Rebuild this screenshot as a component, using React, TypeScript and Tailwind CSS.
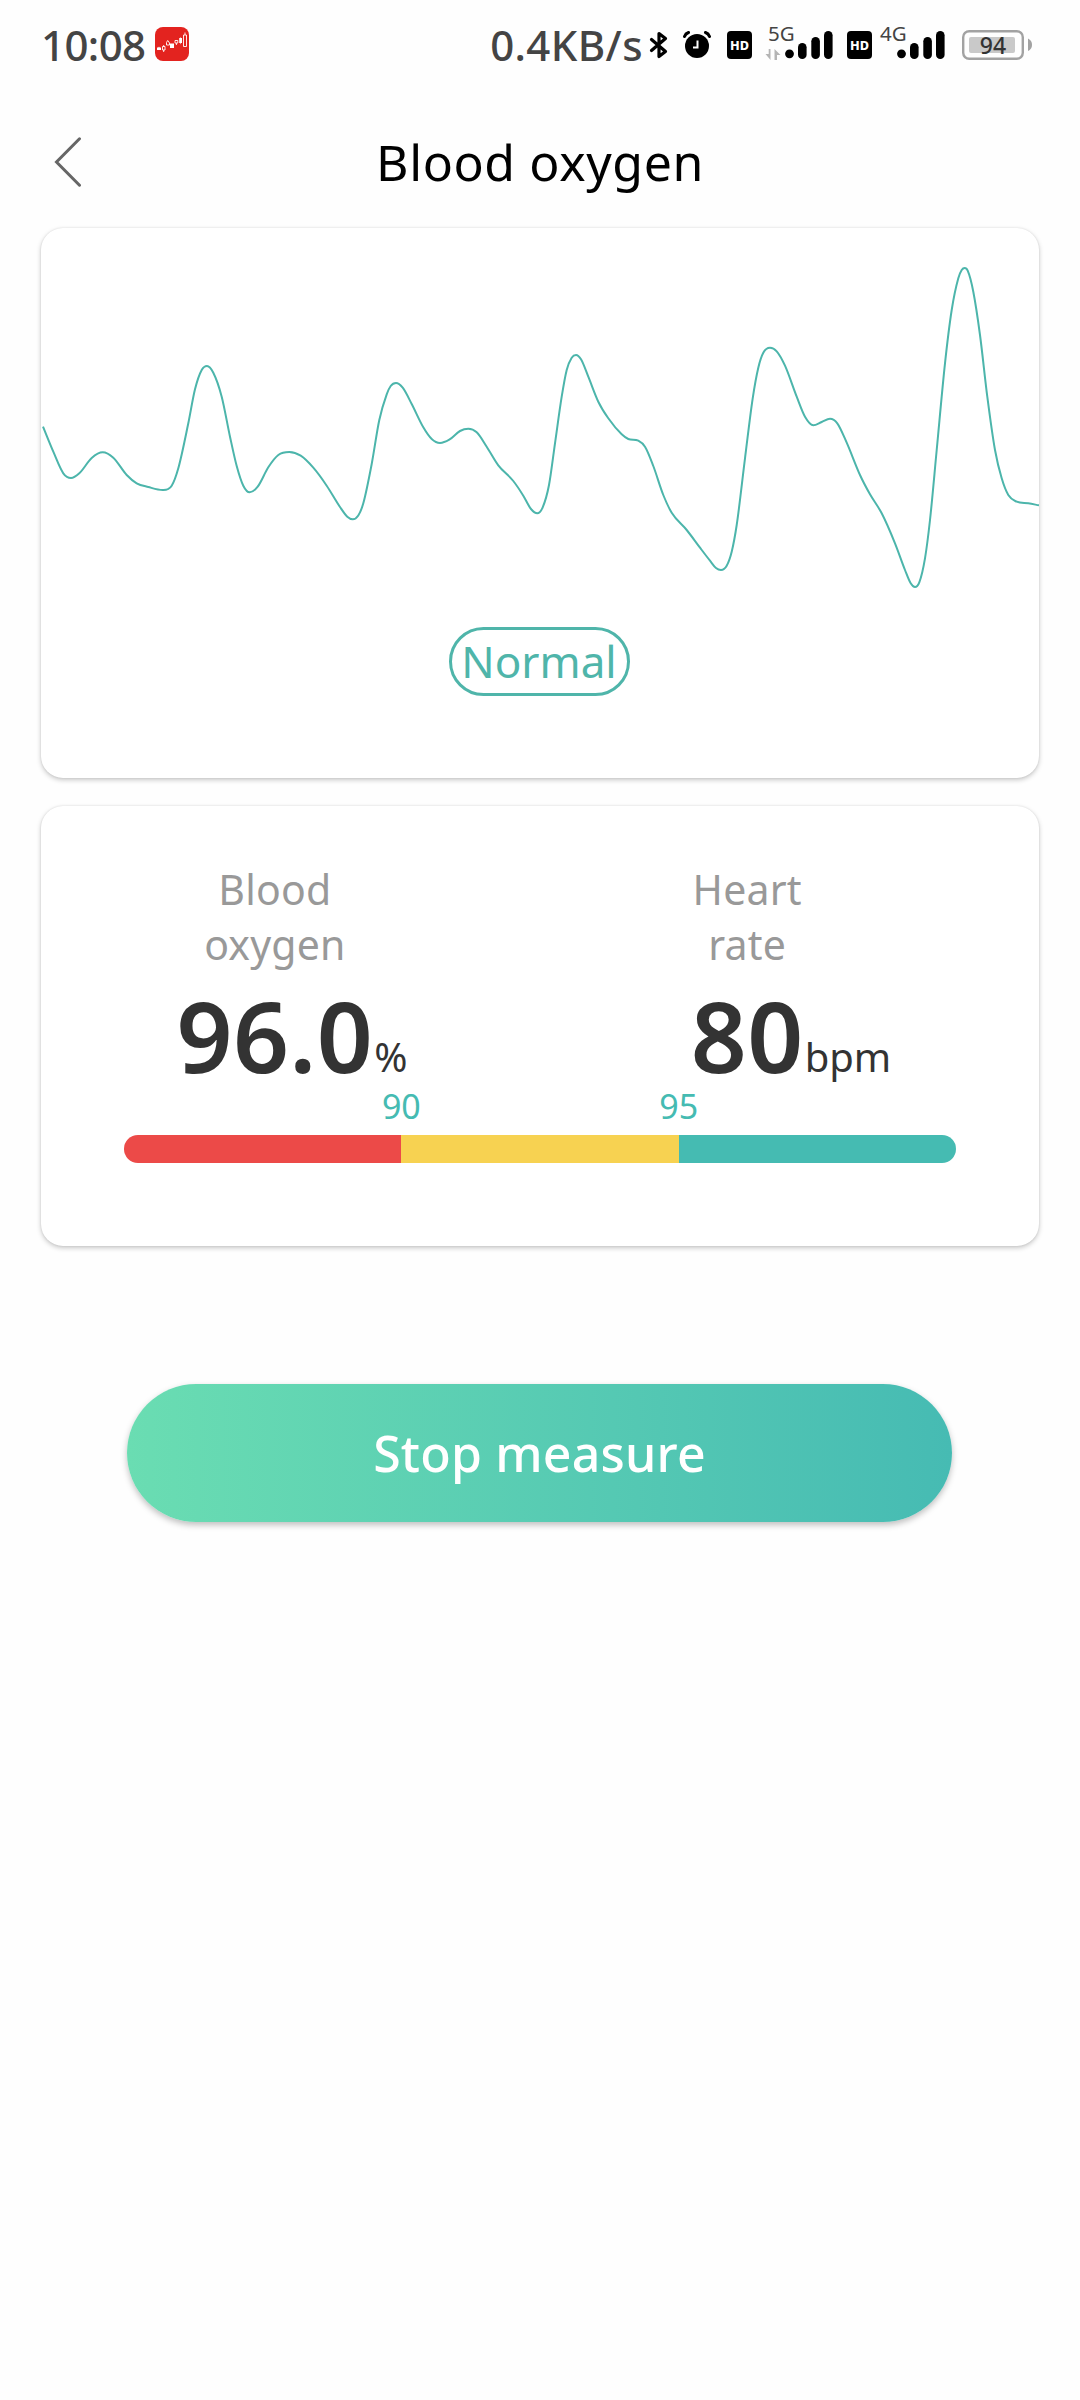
type Point = [number, number];

type Reading = {
  label: string;
  value: string;
  unit: string;
};

const READINGS: Reading[] = [
  { label: "Blood oxygen", value: "96.0", unit: "%" },
  { label: "Heart rate", value: "80", unit: "bpm" },
];

const THRESHOLDS = [90, 95];

const WAVE: Point[] = [
  [43, 426.7], [53.3, 451.7], [63.3, 473.3], [71, 478], [79.3, 473.3],
  [91.7, 458], [102.7, 452.3], [113.3, 457.7], [126.7, 475], [136.7, 483.3],
  [148.3, 487], [162.7, 490], [171.7, 485.7], [178.3, 468.3], [188.3, 423.3],
  [195, 389.3], [201.7, 370], [207, 366], [213.3, 372.7], [221.7, 396.7],
  [230, 436.7], [236.7, 466], [243.3, 485.7], [249.7, 492.3], [257.7, 486.7],
  [268.3, 467.3], [278.3, 455], [289.3, 452], [300.7, 455.7], [313.3, 467.7],
  [326.7, 485.7], [340, 507], [347.3, 516.7], [352.7, 519.3], [358.3, 515.5],
  [363.3, 503.3], [371.7, 464], [379.3, 420], [386.7, 394.3], [390.7, 386],
  [396, 383], [402.7, 387.7], [411.7, 404], [423.3, 427.3], [431.7, 439],
  [440, 443], [449.3, 439.7], [460, 431], [468.3, 428.7], [476.7, 432.3],
  [486.7, 446.7], [498.3, 465.3], [513.3, 481], [523.3, 495.7], [531, 509],
  [537.3, 513.3], [542.7, 507.3], [549, 485], [555, 443.3], [561.7, 396.7],
  [566.7, 370], [571.7, 357.7], [576, 355], [581, 359.3], [588.3, 376.7],
  [598.3, 401.7], [608.3, 418.3], [621.7, 434.3], [628.3, 439], [638.3, 440.7],
  [645, 446.7], [653.3, 466], [663.3, 495], [671.7, 512.7], [686.7, 530],
  [700, 547.7], [710, 560.7], [716, 568], [721, 570], [726.7, 565.7],
  [731.7, 551.7], [736.7, 525], [745, 458.3], [752.7, 398.3], [758.3, 367.7],
  [763.3, 352.7], [770, 347.7], [776.7, 351.3], [785, 365.7], [796.7, 396.7],
  [805, 416.7], [813.3, 425.3], [821.7, 422], [830, 418.7], [837.3, 423.3],
  [846.7, 442.7], [860, 475], [870, 494.3], [881.7, 513.3], [895, 543.3],
  [905, 570], [910.7, 583.3], [915, 587], [919.3, 582.3], [925, 558.3],
  [930, 520], [936.7, 450], [945, 363.3], [951.7, 310], [958.3, 278.3],
  [961.7, 270], [964.7, 268], [967.7, 270.7], [973.3, 291.7], [980, 335],
  [987.3, 396.7], [995, 450], [1001.7, 478.3], [1008.3, 495], [1016.7, 501.7],
  [1028.3, 503.3], [1039, 505.3],
];

// Smooth curve through all points, flat at local peaks and valleys
function smoothPath(points: Point[]) {
  const last = points.length - 1;
  const slope = (i: number) =>
    (points[i + 1][1] - points[i][1]) / (points[i + 1][0] - points[i][0]);
  const tangents = points.map((_, i) => {
    if (i === 0) return slope(0);
    if (i === last) return slope(last - 1);
    const a = slope(i - 1);
    const b = slope(i);
    return a * b <= 0 ? 0 : (a + b) / 2;
  });

  let d = `M${points[0][0]} ${points[0][1]}`;
  for (let i = 0; i < last; i++) {
    const [x0, y0] = points[i];
    const [x1, y1] = points[i + 1];
    const h = (x1 - x0) / 3;
    d += `C${x0 + h} ${y0 + tangents[i] * h} ${x1 - h} ${y1 - tangents[i + 1] * h} ${x1} ${y1}`;
  }
  return d;
}

function StockAppIcon() {
  return (
    <svg width="34" height="34" viewBox="0 0 34 34" className="ml-[9px]">
      <rect width="34" height="34" rx="8" fill="#e3231f" />
      <g fill="none" stroke="#fff" strokeWidth="0.9">
        <path d="M7.500 19.500h2.500v3.500H7.500zM8.700 18v1.500M8.700 23v2" />
        <path d="M11.500 18v-2.500l1.200-2 1.800 2.500v2z" />
        <path d="M20 13.500h2.800v2.500H20zM21.400 16v2" />
        <path d="M28.500 8h3v11.500h-3zM30 5.500V8" />
      </g>
      <g fill="#fff">
        <path d="M2 20.500h1.300l.7-1 .7 1H6V23H2z" />
        <rect x="15" y="16.500" width="4" height="4.500" />
        <path d="M24.200 11h1l.4-1 .4 1h1v5h-1l-.4 1.500-.4-1.500h-1z" />
      </g>
    </svg>
  );
}

function BluetoothIcon() {
  return (
    <svg width="20" height="28" viewBox="0 0 20 28" className="ml-[6px]">
      <path
        d="M2.500 8.500l14 12-6.500 5V2.500l6.500 5-14 12"
        fill="none"
        stroke="#000"
        strokeWidth="3.200"
        strokeLinecap="round"
        strokeLinejoin="round"
      />
    </svg>
  );
}

function AlarmIcon() {
  return (
    <svg width="28" height="28" viewBox="0 0 28 28" className="ml-[14px]">
      <circle cx="14" cy="15" r="12" fill="#000" />
      <path
        d="M1.500 5.500q1-3 4-4M26.500 5.500q-1-3-4-4"
        fill="none"
        stroke="#000"
        strokeWidth="3"
        strokeLinecap="round"
      />
      <path d="M14.500 9.500v7H10" fill="none" stroke="#fff" strokeWidth="2" />
    </svg>
  );
}

function HdBadge() {
  return (
    <svg width="25" height="28" viewBox="0 0 25 28">
      <rect width="25" height="28" rx="4" fill="#000" />
      <text
        x="12.500"
        y="18.500"
        textAnchor="middle"
        textLength="19"
        lengthAdjust="spacingAndGlyphs"
        fontSize="13"
        fontWeight="800"
        fill="#fff"
      >
        HD
      </text>
    </svg>
  );
}

function Signal({ network, active }: { network: string; active?: boolean }) {
  return (
    <svg width="69" height="44" viewBox="0 -8 69 44">
      <text x="4" y="17" fontSize="20.500" fontWeight="400" fill="#444">
        {network}
      </text>
      {active && (
        <path
          d="M6.500 25v11L1.500 30h3.200v-5zM10.500 36V25l6 6h-3.500v5z"
          fill="#b5b5b5"
        />
      )}
      <circle cx="25.500" cy="29.800" r="4.400" />
      <rect x="34" y="19" width="8.600" height="16" rx="4.300" />
      <rect x="47.300" y="13" width="8.600" height="22" rx="4.300" />
      <rect x="60" y="7" width="8.600" height="28" rx="4.300" />
    </svg>
  );
}

function Battery({ level }: { level: number }) {
  return (
    <svg width="71" height="30" viewBox="0 0 71 30" className="ml-[17px]">
      <rect x="1.200" y="1.200" width="59.600" height="27.600" rx="6" fill="none" stroke="#a2a2a2" strokeWidth="2.400" />
      <rect x="7" y="7" width="46" height="16" rx="2" fill="#c9c9c9" />
      <path d="M66 8.500q4 2 4 6.300t-4 6.300z" fill="#a2a2a2" />
      <text x="31" y="23.500" textAnchor="middle" fontSize="23" fontWeight="500" fill="#333">
        {level}
      </text>
    </svg>
  );
}

function StatusBar() {
  return (
    <div className="flex h-[88px] items-center pl-[41px] pr-[47px] text-[42px] font-medium text-[#444]">
      <span className="tracking-[-0.6px]">10:08</span>
      <StockAppIcon />
      <span className="ml-auto tracking-[0.4px]">0.4KB/s</span>
      <div className="flex items-center pt-[2px]">
        <BluetoothIcon />
        <AlarmIcon />
        <div className="ml-[16px] flex items-center">
          <HdBadge />
          <div className="-mt-[14px] ml-[12px] mr-[14px]">
            <Signal network="5G" active />
          </div>
          <HdBadge />
          <div className="-mt-[14px] ml-[4px]">
            <Signal network="4G" />
          </div>
        </div>
        <Battery level={94} />
      </div>
    </div>
  );
}

function Header() {
  return (
    <header className="grid h-[140px] grid-cols-3 items-center pt-[8px]">
      <button className="pl-[54px]">
        <svg width="28" height="50" viewBox="0 0 28 50">
          <path
            d="M25.500 1.800L2.500 25l23 23.200"
            fill="none"
            stroke="#666"
            strokeWidth="3"
            strokeLinecap="round"
          />
        </svg>
      </button>
      <h1 className="whitespace-nowrap text-center text-[50px] tracking-[0.6px] text-black">
        Blood oxygen
      </h1>
    </header>
  );
}

const CARD =
  "mx-[41px] rounded-[22px] bg-white shadow-[0_2px_5px_rgba(0,0,0,0.22),0_0_2px_rgba(0,0,0,0.1)]";

export default function App() {
  return (
    <div className="min-h-[2400px] w-[1080px] bg-[#fefefe] font-['Noto_Sans',sans-serif]">
      <StatusBar />
      <Header />

      {/* Pulse wave */}
      <section className={`${CARD} flex h-[550px] flex-col items-center`}>
        <svg width="998" height="399" viewBox="41 228 998 399">
          <path d={smoothPath(WAVE)} fill="none" stroke="#4cb5ab" strokeWidth="2" />
        </svg>
        <div className="mr-[2px] flex h-[69px] w-[181px] items-center justify-center rounded-full border-[3px] border-[#4fb5aa] pb-[2px] text-[44px] text-[#4fb5aa]">
          Normal
        </div>
      </section>

      {/* Readings */}
      <section className={`${CARD} mt-7 h-[440px] pt-[56px]`}>
        <div className="grid grid-cols-2">
          {READINGS.map((r) => (
            <div key={r.label} className="flex items-end justify-center pl-[3px] text-[#333]">
              <div className="flex w-min flex-col items-center">
                <p className="w-0 min-w-full text-center text-[41px] leading-[55px] tracking-[0.2px] text-[#999]">
                  {r.label}
                </p>
                <p className="mt-[13px] text-[98px] font-semibold leading-[100px] tracking-[0.4px]">
                  {r.value}
                </p>
              </div>
              <span className="mb-[-2px] ml-px text-[40px] leading-[60px]">
                {r.unit}
              </span>
            </div>
          ))}
        </div>

        <div className="mx-[83px]">
          <div className="flex justify-center pt-[1px] text-[34px] leading-[40px] text-[#45bbb2]">
            {THRESHOLDS.map((t) => (
              <span key={t} className="w-1/3 text-center">
                {t}
              </span>
            ))}
          </div>
          <div className="mt-[9px] flex h-7 overflow-hidden rounded-full">
            <div className="flex-1 bg-[#ec4a48]" />
            <div className="flex-1 bg-[#f7d251]" />
            <div className="flex-1 bg-[#45bbb2]" />
          </div>
        </div>
      </section>

      <button className="ml-[127px] mt-[138px] flex h-[138px] w-[825px] items-center justify-center rounded-full bg-linear-to-r from-[#6addb2] to-[#46bbb3] pt-[1px] text-[50px] font-medium tracking-[0.2px] text-white shadow-[0_3px_6px_rgba(0,0,0,0.25)]">
        Stop measure
      </button>
    </div>
  );
}
